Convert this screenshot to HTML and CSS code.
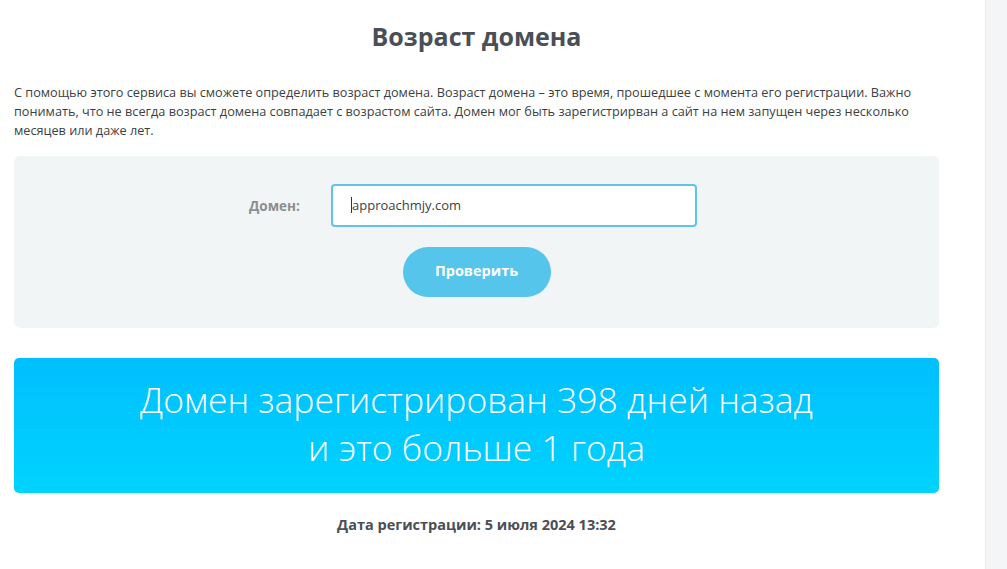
FILE: index.html
```html
<!DOCTYPE html>
<html lang="ru">
<head>
<meta charset="utf-8">
<title>Возраст домена</title>
<link rel="stylesheet" href="styles.css">
</head>
<body>
<div class="page">
  <main class="main">
    <h1 class="title">Возраст домена</h1>
    <p class="intro">С помощью этого сервиса вы сможете определить возраст домена. Возраст домена – это время, прошедшее с момента его регистрации. Важно понимать, что не всегда возраст домена совпадает с возрастом сайта. Домен мог быть зарегистрирван а сайт на нем запущен через несколько месяцев или даже лет.</p>
    <form class="form">
      <div class="field">
        <label class="label" for="domain">Домен:</label>
        <div class="input"><span class="caret"></span>approachmjy.com</div>
      </div>
      <button type="button" class="btn">Проверить</button>
    </form>
    <div class="result">
      <div class="result-line">Домен зарегистрирован 398 дней назад</div>
      <div class="result-line">и это больше 1 года</div>
    </div>
    <p class="date">Дата регистрации: 5 июля 2024 13:32</p>
  </main>
  <aside class="side"></aside>
</div>
</body>
</html>
```
FILE: styles.css
```css
html, body {
  margin: 0;
  padding: 0;
  background: #fff;
  height: 100%;
}
body {
  font-family: "Open Sans", "Noto Sans", sans-serif;
  color: #3d4249;
  overflow: hidden;
}
.page {
  display: flex;
  height: 569px;
}
.main {
  flex: 1;
  padding: 0 46px 0 14px;
}
.side {
  width: 21px;
  background: #f4f5f7;
  border-left: 1px solid #e9ebee;
}
.title {
  margin: 19px 0 0;
  text-align: center;
  font-family: "Open Sans", sans-serif;
  font-weight: 700;
  font-size: 25px;
  line-height: 34px;
  color: #4a4f57;
}
.intro {
  margin: 30px 0 0;
  font-size: 12.7px;
  line-height: 19px;
  color: #3b3f45;
}
.form {
  margin-top: 16px;
  background: #f2f5f6;
  border-radius: 6px;
  height: 172px;
  box-sizing: border-box;
  padding-top: 28px;
  display: flex;
  flex-direction: column;
  align-items: center;
}
.field {
  display: flex;
  align-items: center;
  margin-left: -7px;
}
.label {
  font-weight: 700;
  font-size: 13.5px;
  color: #8e8e8e;
  width: 82px;
}
.input {
  width: 366px;
  height: 43px;
  box-sizing: border-box;
  border: 2px solid #5ec4ea;
  border-radius: 4px;
  background: #fff;
  font-size: 13px;
  color: #3b3f45;
  display: flex;
  align-items: center;
  padding-left: 18px;
  padding-bottom: 2px;
}
.caret {
  display: inline-block;
  width: 1px;
  height: 16px;
  background: #333;
}
.btn {
  margin-top: 20px;
  width: 148px;
  height: 50px;
  border: none;
  border-radius: 25px;
  background: #56c5ec;
  color: #fff;
  font-family: "Open Sans", sans-serif;
  font-weight: 700;
  font-size: 14.5px;
  padding: 0 0 3px;
}
.result {
  margin-top: 30px;
  height: 135px;
  box-sizing: border-box;
  border-radius: 5px;
  background: linear-gradient(180deg, #00bffe 0%, #00d3fe 100%);
  color: #fff;
  text-align: center;
  padding-top: 17px;
  font-weight: 300;
  font-size: 35.5px;
  line-height: 48px;
}
.date {
  margin: 22px 0 0;
  text-align: center;
  font-weight: 700;
  font-size: 14.5px;
  color: #4a4f57;
}
```
